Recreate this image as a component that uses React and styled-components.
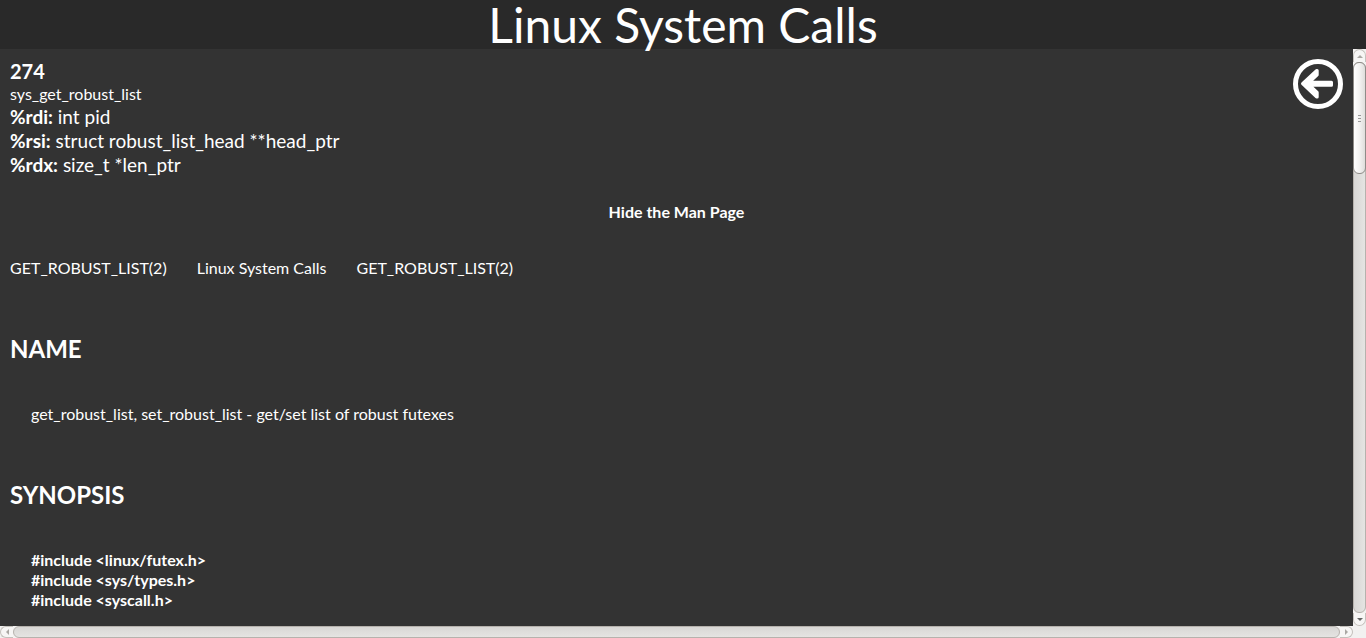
import React from "react";
import styled, { createGlobalStyle } from "styled-components";

const GlobalStyle = createGlobalStyle`
  * { box-sizing: border-box; }
  body {
    margin: 0;
    background: #333;
    color: #fff;
    font-family: Lato, "Liberation Sans", sans-serif;
    font-size: 16px;
    line-height: 20px;
  }
`;

const Page = styled.div`
  display: flex;
  flex-direction: column;
  height: 100vh;
`;

const Header = styled.header`
  flex: none;
  background: #292929;
  text-align: center;
`;

const Title = styled.h1`
  margin: 0;
  font-size: 48px;
  line-height: 49px;
  font-weight: 400;
`;

const Viewport = styled.div`
  flex: 1;
  min-height: 0;
  display: grid;
  grid-template-columns: minmax(0, 1fr) 13px;
  grid-template-rows: minmax(0, 1fr) 12px;
`;

const Content = styled.main`
  overflow: hidden;
  padding: 10px;
`;

const Summary = styled.section`
  display: flex;
  justify-content: space-between;
  align-items: flex-start;
`;

const CallNumber = styled.h2`
  margin: 0;
  font-size: 20px;
  line-height: 24px;
`;

const CallName = styled.p`
  margin: 0;
  line-height: 22px;
`;

const Register = styled.p`
  margin: 0;
  font-size: 19px;
  line-height: 24px;
`;

const BackButton = styled.button`
  border: 0;
  padding: 0;
  background: none;
  color: #fff;
  cursor: pointer;

  svg { display: block; }
`;

const ToggleButton = styled.button`
  display: block;
  margin: 25px auto 36px;
  border: 0;
  padding: 0;
  background: none;
  color: #fff;
  font: inherit;
  font-weight: 700;
  cursor: pointer;
`;

const ManHeader = styled.div`
  display: flex;
  gap: 30px;
`;

const ManHeading = styled.h2`
  margin: 56px 0 40px;
  font-size: 24px;
  line-height: 30px;
`;

const ManText = styled.div`
  padding-left: 21px;
  font-weight: ${(p) => (p.$bold ? 700 : 400)};
`;

const Bar = styled.div`
  display: flex;
  flex-direction: ${(p) => (p.$vertical ? "column" : "row")};
  background: #f2f1f0;
`;

const capRadius = {
  up: "7px 7px 0 0",
  down: "0 0 7px 7px",
  left: "7px 0 0 7px",
  right: "0 7px 7px 0",
};

const innerEdge = { up: "bottom", down: "top", left: "right", right: "left" };

const ArrowButton = styled.button`
  flex: none;
  display: flex;
  align-items: center;
  justify-content: center;
  width: 13px;
  height: ${(p) => (p.$horizontal ? 12 : 13)}px;
  border: 1px solid #c4c1bc;
  border-${(p) => innerEdge[p.$direction]}: 0;
  border-radius: ${(p) => capRadius[p.$direction]};
  padding: 0;
  background: #f7f6f5;
  color: ${(p) => (p.$active ? "#666" : "#aaa7a3")};
`;

const Track = styled.div`
  flex: 1;
  min-width: 0;
  min-height: 0;
  border: 1px solid #b6b2ad;
  border-radius: 6px;
  background: linear-gradient(${(p) => (p.$vertical ? "to right" : "to bottom")}, #d8d7d5, #e5e4e2);
`;

const Thumb = styled.div`
  height: 112px;
  margin: -1px -1px 0;
  border: 1px solid #8f8c88;
  border-radius: 6px;
  background: linear-gradient(to right, #fff, #f3f2f1 50%, #dfdddb);
  display: flex;
  flex-direction: column;
  align-items: center;
  justify-content: center;
  gap: 2px;
`;

const Grip = styled.span`
  width: 3px;
  height: 1px;
  background: #999;
`;

const Corner = styled.div`
  background: #f2f1f0;
`;

const arrows = {
  up: "M0 4L3 1L6 4Z",
  down: "M0 1L3 4L6 1Z",
  left: "M4 0L1 3L4 6Z",
  right: "M1 0L4 3L1 6Z",
};

function ScrollArrow({ direction, active }) {
  const horizontal = direction === "left" || direction === "right";
  return (
    <ArrowButton
      aria-label={"Scroll " + direction}
      $direction={direction}
      $horizontal={horizontal}
      $active={active}
    >
      <svg width={horizontal ? 5 : 6} height={horizontal ? 6 : 5} aria-hidden="true">
        <path d={arrows[direction]} fill="currentColor" />
      </svg>
    </ArrowButton>
  );
}

const registers = [
  ["%rdi:", "int pid"],
  ["%rsi:", "struct robust_list_head **head_ptr"],
  ["%rdx:", "size_t *len_ptr"],
];

const includes = ["linux/futex.h", "sys/types.h", "syscall.h"];

export default function App() {
  return (
    <>
      <GlobalStyle />
      <Page>
        <Header>
          <Title>Linux System Calls</Title>
        </Header>
        <Viewport>
          <Content>
            <Summary>
              <div>
                <CallNumber>274</CallNumber>
                <CallName>sys_get_robust_list</CallName>
                {registers.map(([name, value]) => (
                  <Register key={name}>
                    <b>{name}</b> {value}
                  </Register>
                ))}
              </div>
              <BackButton aria-label="Back">
                <svg width="50" height="50" viewBox="0 0 50 50" fill="none" stroke="currentColor">
                  <circle cx="25" cy="25" r="22.5" strokeWidth="5" />
                  <path
                    d="M9.500 24.700L23.500 11.500H24.200V16L16.500 23.200H38.500V26.200H16.500L24.200 33.400V38H23.500Z"
                    fill="currentColor"
                    strokeWidth="3"
                    strokeLinejoin="round"
                  />
                </svg>
              </BackButton>
            </Summary>
            <ToggleButton>Hide the Man Page</ToggleButton>
            <ManHeader>
              <span>GET_ROBUST_LIST(2)</span>
              <span>Linux System Calls</span>
              <span>GET_ROBUST_LIST(2)</span>
            </ManHeader>
            <ManHeading>NAME</ManHeading>
            <ManText>get_robust_list, set_robust_list - get/set list of robust futexes</ManText>
            <ManHeading>SYNOPSIS</ManHeading>
            <ManText $bold>
              {includes.map((file) => (
                <div key={file}>{`#include <${file}>`}</div>
              ))}
            </ManText>
          </Content>
          <Bar $vertical>
            <ScrollArrow direction="up" />
            <Track $vertical>
              <Thumb>
                <Grip />
                <Grip />
                <Grip />
              </Thumb>
            </Track>
            <ScrollArrow direction="down" active />
          </Bar>
          <Bar>
            <ScrollArrow direction="left" />
            <Track />
            <ScrollArrow direction="right" />
          </Bar>
          <Corner />
        </Viewport>
      </Page>
    </>
  );
}
